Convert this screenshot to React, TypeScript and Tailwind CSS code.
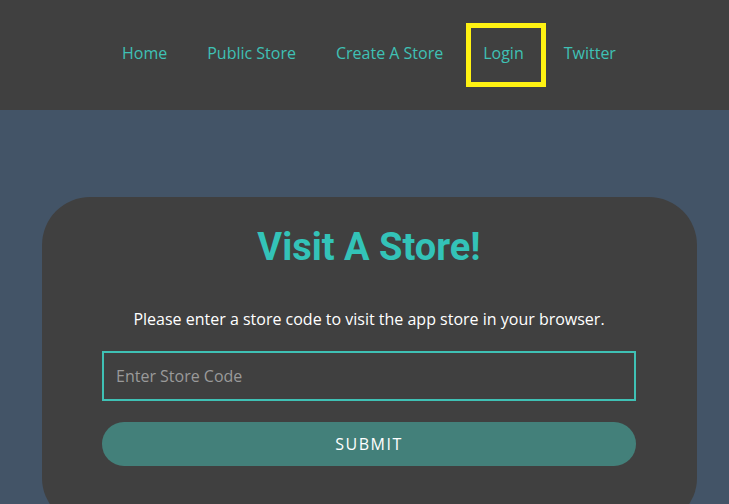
const links = ['Home', 'Public Store', 'Create A Store', 'Login', 'Twitter'];

export default function App() {
  return (
    <div className="min-h-screen bg-[#435467] font-['Open_Sans',sans-serif] overflow-hidden">
      <nav className="h-[110px] bg-[#404040] flex items-center pl-[102px]">
        {links.map((l) =>
          l === 'Login' ? (
            <a
              key={l}
              className="border-[5px] border-[#fff212] pl-[12px] pr-[17px] pb-[4px] h-[64px] flex items-center text-[16px] text-[#3fc1b5] ml-[3px] mr-[-2px]"
            >
              {l}
            </a>
          ) : (
            <a key={l} className="px-[20px] mb-[4px] text-[16px] text-[#3fc1b5]">
              {l}
            </a>
          )
        )}
      </nav>
      <div className="pt-[87px]">
        <div className="ml-[42px] w-[655px] bg-[#404040] rounded-[48px] pt-[27px] pb-[60px] pl-[60px] pr-[61px] flex flex-col items-center">
          <h1 className="font-['Roboto',sans-serif] font-bold text-[38px] leading-[46px] text-[#33c3b8]">
            Visit A Store!
          </h1>
          <p className="mt-[38px] text-white text-[16px] leading-[22px]">
            Please enter a store code to visit the app store in your browser.
          </p>
          <input
            placeholder="Enter Store Code"
            className="mt-[21px] w-full h-[50px] border-2 border-[#3fc1b5] bg-transparent px-[12px] text-[16px] text-white placeholder:text-[#9a9a9a] outline-none"
          />
          <button className="mt-[21px] w-full h-[44px] rounded-full bg-[#43807a] text-white text-[16px] tracking-[1.5px]">
            SUBMIT
          </button>
        </div>
      </div>
    </div>
  );
}
